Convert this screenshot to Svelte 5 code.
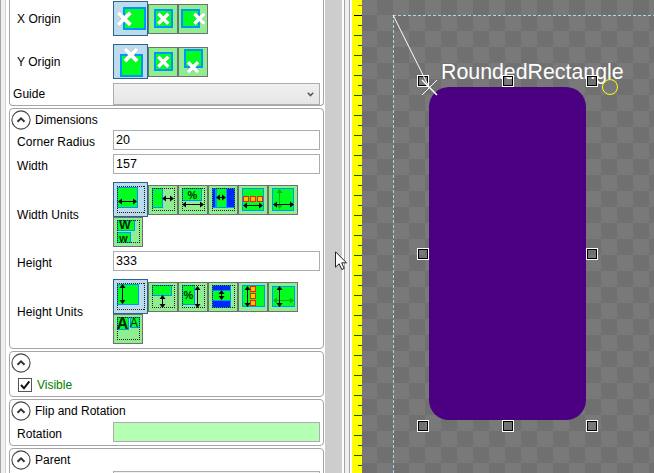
<script>
  const G = '#00ff21', B = '#0094ff';
  const box = (x, y, w, h, fill = G, stroke = B, sw = 1) => ({ t: 'r', x, y, w, h, fill, stroke, sw });
  const dots = (x = 4, y = 3, w = 22, h = 22) => ({ t: 'd', x, y, w, h });
  const cross = (x, y, s, w) => ({ t: 'x', x, y, s, w });
  const hor = (x1, x2, y, o = 1) => ({ t: 'h', x1, x2, y, o });
  const ver = (y1, y2, x, o = 1) => ({ t: 'v', y1, y2, x, o });
  const txt = (s, x, y, size, w = 700) => ({ t: 't', s, x, y, size, w });
  const cell = (x, y) => box(x, y, 5, 5, '#ffc800', '#ff1a00', 1);

  const xOrigin = [
    [box(11, 7, 21, 21, G, B, 2), cross(11.3, 17.7, 6.1, 4)],
    [box(7, 6, 17, 17, G, B, 2), cross(15.3, 14.7, 5, 3.4)],
    [box(4, 6, 17, 17, G, B, 2), cross(21.3, 14.7, 5, 3.4)]
  ];
  const yOrigin = [
    [box(8, 11, 21, 21, G, B, 2), cross(18, 11, 6.1, 4)],
    [box(7, 6, 17, 17, G, B, 2), cross(15.3, 14.7, 5, 3.4)],
    [box(7, 3, 17, 17, G, B, 2), cross(15, 20.3, 5, 3.4)]
  ];
  const widthUnits = [
    [box(4, 5, 20, 20), dots(4, 4, 27, 26), hor(5, 24, 19)],
    [box(4, 3, 10, 19), dots(), hor(14, 26, 13)],
    [box(4, 3, 19, 12), dots(), txt('%', 14.5, 14, 11), hor(4, 26, 19)],
    [box(4, 3, 3, 19, '#0026ff'), box(8, 3, 10, 19), box(18, 3, 8, 19, '#0026ff'), dots(), hor(8, 18, 12)],
    [box(4, 3, 21, 22), cell(5, 11), cell(12, 11), cell(19, 11), hor(5, 25, 20)],
    [box(4, 3, 21, 22), ver(4, 24, 11, 0.3), hor(5, 26, 19)]
  ];
  const widthMore = [[box(4, 3, 17, 10), box(4, 15, 13, 10), dots(), txt('W', 12, 12.3, 12.5), txt('w', 10.5, 24.8, 10.8)]];
  const heightUnits = [
    [box(4, 5, 21, 20), dots(4, 4, 27, 26), ver(5, 25, 9)],
    [box(4, 3, 19, 10), dots(), ver(13, 26, 14)],
    [box(4, 3, 12, 19), dots(), txt('%', 10.5, 17, 11), ver(4, 26, 19)],
    [box(4, 3, 18, 22, '#0026ff'), box(4, 8, 18, 10), dots(), ver(8, 18, 13)],
    [box(4, 3, 22, 21), cell(12, 4), cell(12, 11), cell(12, 18), ver(4, 25, 9)],
    [box(4, 4, 22, 20), hor(5, 26, 18, 0.3), ver(4, 25, 11)]
  ];
  const heightMore = [[box(4, 3, 11, 12), box(17, 3, 9, 10), dots(), txt('A', 9.5, 15, 16), txt('A', 21, 12.5, 12, 400)]];

  const ticks = Array.from({ length: 47 }, (_, i) => 5 + i * 10);
  const handles = [[417, 75], [502, 75], [586, 75], [417, 248], [586, 248], [417, 420], [502, 420], [586, 420]];
</script>

{#snippet buttons(list, first)}
  <div class="buttons">
    {#each list as shapes, i}
      {@const size = first && i === 0 ? 35 : 30}
      <button class:on={size === 35} aria-label="option">
        <svg width={size} height={size}>
          {#each shapes as s}
            {#if s.t === 'r'}
              {@const o = s.sw === 1 ? 0.5 : 0}
              <rect x={s.x + o} y={s.y + o} width={s.w} height={s.h} fill={s.fill} stroke={s.stroke} stroke-width={s.sw} />
            {:else if s.t === 'd'}
              <path d="M{s.x} {s.y + 0.5}h{s.w + 1}M{s.x} {s.y + s.h + 0.5}h{s.w + 1}M{s.x + 0.5} {s.y}v{s.h + 1}M{s.x + s.w + 0.5} {s.y}v{s.h + 1}" fill="none" stroke="#1c1c1c" stroke-dasharray="1 1" />
            {:else if s.t === 'x'}
              <path d="M{s.x - s.s} {s.y - s.s}l{s.s * 2} {s.s * 2}m0 {-s.s * 2}l{-s.s * 2} {s.s * 2}" stroke="#777" stroke-width={s.w + 0.7} opacity=".45" />
              <path d="M{s.x - s.s} {s.y - s.s}l{s.s * 2} {s.s * 2}m0 {-s.s * 2}l{-s.s * 2} {s.s * 2}" stroke="#fff" stroke-width={s.w} />
            {:else if s.t === 'h'}
              <path opacity={s.o} d="M{s.x1} {s.y + 0.5}l4-3v2.5H{s.x2 - 4}v-2.5l4 3-4 3v-2.5H{s.x1 + 4}v2.5z" />
            {:else if s.t === 'v'}
              <path opacity={s.o} d="M{s.x + 0.5} {s.y1}l-3 4h2.5V{s.y2 - 4}h-2.5l3 4 3-4h-2.5V{s.y1 + 4}h2.5z" />
            {:else}
              <text x={s.x} y={s.y} font-size={s.size} font-weight={s.w} text-anchor="middle" fill="#06280a">{s.s}</text>
            {/if}
          {/each}
        </svg>
      </button>
    {/each}
  </div>
{/snippet}

{#snippet header(title)}
  <header>
    <svg width="20" height="20"><circle cx="10" cy="10" r="9.1" fill="#fff" stroke="#444" stroke-width="1.1" /><path d="M6.5 11.8L10 8.4l3.5 3.4" fill="none" stroke="#333" stroke-width="2" /></svg>
    <span>{title}</span>
  </header>
{/snippet}

<div class="app">
  <aside>
    <section class="g1">
      <div class="row" style:height="43px"><label>X Origin</label>{@render buttons(xOrigin, true)}</div>
      <div class="row" style:height="39px"><label>Y Origin</label>{@render buttons(yOrigin, true)}</div>
      <div class="row guide"><label>Guide</label>
        <div class="combo"><svg width="7" height="5"><path d="M.8 .8L3.5 3.6 6.2 .8" fill="none" stroke="#555" stroke-width="1.5" /></svg></div>
      </div>
    </section>
    <section class="g2">
      {@render header('Dimensions')}
      <div class="row line"><label>Corner Radius</label><div class="field">20</div></div>
      <div class="row line"><label>Width</label><div class="field">157</div></div>
      <div class="row units"><label>Width Units</label><div>{@render buttons(widthUnits, true)}{@render buttons(widthMore, false)}</div></div>
      <div class="row line second"><label>Height</label><div class="field">333</div></div>
      <div class="row units"><label>Height Units</label><div>{@render buttons(heightUnits, true)}{@render buttons(heightMore, false)}</div></div>
    </section>
    <section class="g3">
      {@render header('')}
      <div class="check">
        <svg width="14" height="14"><rect x=".5" y=".5" width="13" height="13" fill="#fff" stroke="#555" /><path d="M3 7l3 3.3L11.3 3.3" fill="none" stroke="#111" stroke-width="2" /></svg>
        <span>Visible</span>
      </div>
    </section>
    <section class="g4">
      {@render header('Flip and Rotation')}
      <div class="row line rot"><label>Rotation</label><div class="field green"></div></div>
    </section>
    <section class="g5">
      {@render header('Parent')}
      <div class="row line"><label></label><div class="field gray"></div></div>
    </section>
  </aside>
  <div class="scroll"></div>
  <div class="splitter"></div>
  <svg class="ruler" width="10" height="473">
    {#each ticks as y}
      <rect x={y % 20 === 15 ? 2 : 6} y={y} width="8" height="1" fill={y === 5 ? '#b55a00' : y === 15 ? '#000' : '#006400'} />
    {/each}
  </svg>
  <main>
    <svg width="292" height="473" viewBox="362 0 292 473">
      <defs>
        <pattern id="checks" x="393" y="15" width="32" height="32" patternUnits="userSpaceOnUse">
          <rect width="32" height="32" fill="#797979" /><path d="M0 0h16v16H0zM16 16h16v16H16z" fill="#707070" />
        </pattern>
      </defs>
      <rect x="362" width="292" height="473" fill="url(#checks)" shape-rendering="crispEdges" />
      <path d="M393 15.5H654M393.5 15V473" stroke="#add8e6" stroke-dasharray="3 2" fill="none" />
      <rect x="429" y="87" width="157" height="333" rx="20" fill="#4b0082" />
      <text x="441" y="79" font-size="21.33" fill="#fff">RoundedRectangle</text>
      {#each handles as [x, y]}
        <rect x={x + 0.5} y={y + 0.5} width="11" height="11" fill="none" stroke="#fff" />
        <rect x={x + 1.5} y={y + 1.5} width="9" height="9" fill="none" stroke="#000" />
      {/each}
      <path d="M393 15l36 72M422 95l15-15" stroke="#fff" stroke-width="1" />
      <path d="M422 80l15 15" stroke="#fff" stroke-width="1.5" />
      <circle cx="610" cy="87" r="7.5" fill="none" stroke="#ff0" />
    </svg>
  </main>
  <svg class="cursor" width="14" height="21"><path d="M.5 .8V16.2L4.2 12.8 6.8 18.5 9.2 17.4 6.7 11.8H11.5z" fill="#fff" stroke="#222" /></svg>
</div>

<style>
  .app { position: relative; display: flex; width: 654px; height: 473px; overflow: hidden; background: #fff; font: 12px/14px "Liberation Sans", Arial, sans-serif; color: #000; }
  aside { box-sizing: border-box; width: 325px; border-left: 1px solid #a5a5a5; background: linear-gradient(90deg, #f0f0f0 4px, #d0d0d0 4px 5px, #fff 5px); display: flex; flex-direction: column; gap: 2px; flex: none; padding: 0 1px 0 8px; }
  section { box-sizing: border-box; border: 1px solid #a5a5a8; border-radius: 4px; flex: none; background: #fff; }
  .g1 { height: 106px; border-top: 0; border-radius: 0 0 4px 4px; padding-top: 1px; }
  .g2 { height: 241px; }
  .g3 { height: 46px; }
  .g4 { height: 47px; }
  .g5 { height: 50px; }
  header { display: flex; align-items: center; gap: 4px; height: 20px; padding: 1px 0 0 1px; }
  .row { display: flex; align-items: flex-start; }
  .row label { box-sizing: border-box; width: 103px; padding: 11px 0 0 7px; flex: none; letter-spacing: 0.05px; }
  .row.guide label { padding: 4px 0 0 3px; }
  .line { height: 24px; }
  .row.line label { padding-top: 5px; }
  .units { height: 65px; padding-top: 4px; }
  .row.units label { padding-top: 26px; }
  .second { padding-top: 4px; }
  .row.rot label { padding-top: 6px; }
  .field { box-sizing: border-box; width: 207px; height: 20px; border: 1px solid #abadb3; padding: 2px 2px; font-size: 12.5px; line-height: 15px; background: #fff; }
  .green { background: #b4ffb4; margin-top: 1px; }
  .gray { background: #f0f0f0; margin-top: 1px; }
  .combo { box-sizing: border-box; width: 207px; height: 22px; border: 1px solid #acacac; background: linear-gradient(#f0f0f0, #e5e5e5); display: flex; justify-content: flex-end; align-items: center; padding-right: 5px; }
  .buttons { display: flex; align-items: flex-start; }
  button { box-sizing: border-box; width: 30px; height: 30px; padding: 0; margin: 3px 0 0; border: 0; background: #90ee90; box-shadow: inset 0 0 0 1px #707070; font: inherit; }
  .buttons + .buttons button { margin-top: 0; }
  button.on { width: 35px; height: 35px; margin: 0; background: #bcdcee; box-shadow: inset 0 0 0 1px #2c628b; }
  svg { display: block; flex: none; }
  .check { display: flex; align-items: center; gap: 5px; padding: 5px 0 0 8px; color: #008000; }
  .check span { margin-top: -1px; }
  .scroll { width: 17px; background: #cdcdcd; flex: none; }
  .splitter { box-sizing: border-box; width: 6px; margin: 0 2px; background: #f0f0f0; border: solid #a5a5a5; border-width: 0 1px; flex: none; }
  .ruler { background: #ff0; }
  .cursor { position: absolute; left: 335px; top: 251px; }
</style>
